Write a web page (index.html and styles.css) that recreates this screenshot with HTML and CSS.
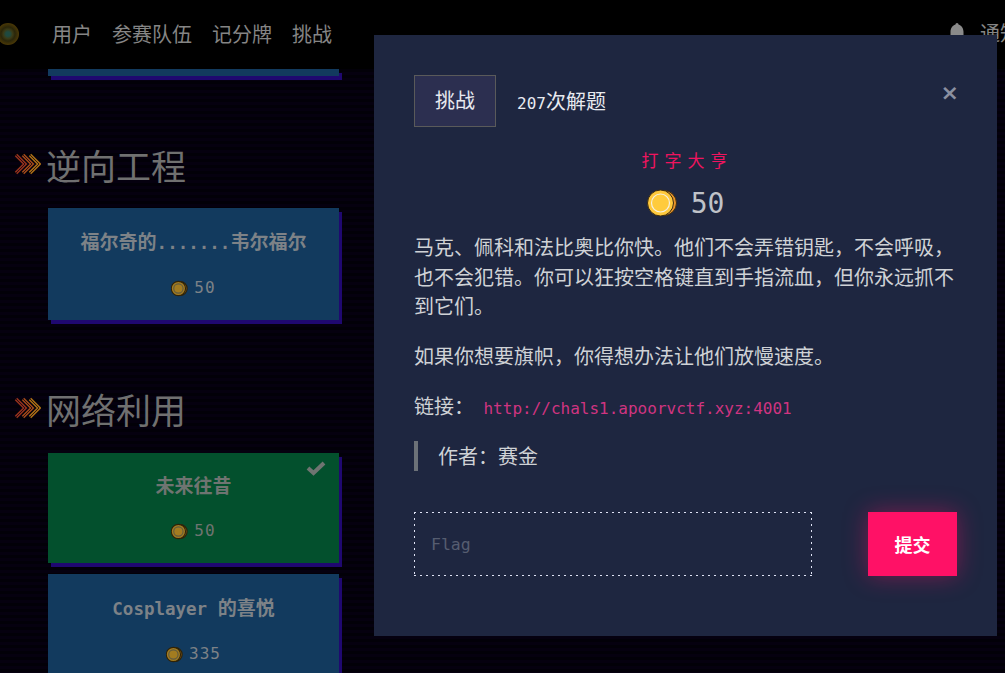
FILE: index.html
```html
<!DOCTYPE html>
<html lang="zh">

<head>
    <meta charset="utf-8">
    <meta name="viewport" content="width=device-width, initial-scale=1.0">
    <title>挑战</title>
    <link rel="stylesheet" href="styles.css">
</head>

<body>
    <svg class="defs" width="0" height="0">
        <defs>
            <g id="coin">
                <circle cx="17" cy="14" r="12.500" fill="#e8932a" stroke="#3a2a10"/>
                <circle cx="13.500" cy="14" r="13" fill="#ffc93c" stroke="#3a2a10"/>
                <circle cx="13.500" cy="14" r="9" fill="#ffcb3d" stroke="#f4f0e0" stroke-width="1.200"/>
            </g>
            <g id="coin-dim">
                <circle cx="17" cy="14" r="12.500" fill="#7a5418" stroke="#2e2208" stroke-width="2"/>
                <circle cx="13.500" cy="14" r="13" fill="#a37c20" stroke="#2e2208" stroke-width="2"/>
                <circle cx="13.500" cy="14" r="8.500" fill="#a37c20" stroke="#5f5a40" stroke-width="2"/>
            </g>
            <g id="chevrons" fill="none">
                <path d="M2 2 L11 11 L2 20" stroke="#8f2f1c" stroke-width="3.500"/>
                <path d="M2 2 L11 11 L2 20" stroke="#2a0c10" stroke-width="1"/>
                <path d="M9 2 L18 11 L9 20" stroke="#9c4619" stroke-width="3.500"/>
                <path d="M9 2 L18 11 L9 20" stroke="#2a1210" stroke-width="1"/>
                <path d="M16 2 L25 11 L16 20" stroke="#a66a15" stroke-width="3.500"/>
                <path d="M16 2 L25 11 L16 20" stroke="#2e1c10" stroke-width="1"/>
            </g>
        </defs>
    </svg>

    <header class="navbar">
        <span class="logo"></span>
        <nav class="nav-links">
            <a>用户</a>
            <a>参赛队伍</a>
            <a>记分牌</a>
            <a>挑战</a>
        </nav>
        <div class="nav-right">
            <svg class="bell" width="14" height="20" viewBox="0 0 14 20"><path d="M7 0 C8 0 8.500 1 8.500 1.500 C12 2.500 13.500 6 13.500 9 L13.500 16 L0.500 16 L0.500 9 C0.500 6 2 2.500 5.500 1.500 C5.500 1 6 0 7 0Z" fill="#8a8a8a"/></svg>
            <a>通知</a>
        </div>
    </header>

    <main class="board">
        <div class="card card-stub"></div>

        <section class="category">
            <h2 class="category-title">
                <svg class="chevrons" width="27" height="22" viewBox="0 0 27 22"><use href="#chevrons"/></svg>
                逆向工程
            </h2>
            <article class="card">
                <h3 class="card-name">福尔奇的<span class="latin">.......</span>韦尔福尔</h3>
                <p class="card-points"><svg width="17" height="17" viewBox="0 0 31 28"><use href="#coin-dim"/></svg>50</p>
            </article>
        </section>

        <section class="category category-second">
            <h2 class="category-title">
                <svg class="chevrons" width="27" height="22" viewBox="0 0 27 22"><use href="#chevrons"/></svg>
                网络利用
            </h2>
            <div class="card-list">
                <article class="card card-solved">
                    <svg class="check" width="20" height="16" viewBox="0 0 20 16"><path d="M2 8 L7.500 13 L18 3" fill="none" stroke="#6f7471" stroke-width="4"/></svg>
                    <h3 class="card-name">未来往昔</h3>
                    <p class="card-points"><svg width="17" height="17" viewBox="0 0 31 28"><use href="#coin-dim"/></svg>50</p>
                </article>
                <article class="card">
                    <h3 class="card-name"><span class="latin">Cosplayer </span>的喜悦</h3>
                    <p class="card-points"><svg width="17" height="17" viewBox="0 0 31 28"><use href="#coin-dim"/></svg>335</p>
                </article>
            </div>
        </section>
    </main>

    <div class="modal">
        <div class="modal-top">
            <span class="tab">挑战</span>
            <span class="solves"><span class="solves-num">207</span>次解题</span>
            <span class="close">×</span>
        </div>
        <h3 class="modal-name">打字大亨</h3>
        <p class="modal-points">
            <svg width="31" height="30" viewBox="0 0 31 28"><use href="#coin"/></svg>
            50
        </p>
        <div class="description">
            <p>马克、佩科和法比奥比你快。他们不会弄错钥匙，不会呼吸，也不会犯错。你可以狂按空格键直到手指流血，但你永远抓不到它们。</p>
            <p>如果你想要旗帜，你得想办法让他们放慢速度。</p>
            <p>链接： <a class="link">http://chals1.apoorvctf.xyz:4001</a></p>
            <blockquote>作者：赛金</blockquote>
        </div>
        <form class="flag-form">
            <input type="text" placeholder="Flag">
            <button type="button">提交</button>
        </form>
    </div>
</body></html>
```

FILE: styles.css
```css
* {
    box-sizing: border-box;
    margin: 0;
    padding: 0;
}

body {
    height: 100vh;
    overflow: hidden;
    background-color: #04000f;
    background-image: repeating-linear-gradient(to bottom, #05000f 0, #05000f 3px, #020008 3px, #020008 6px);
    color: #858585;
    font-family: "DejaVu Sans Mono", "Noto Sans CJK SC", monospace;
}

.defs {
    position: absolute;
}

.navbar {
    height: 69px;
    display: flex;
    align-items: center;
    background-color: #000;
    position: relative;
    font-family: "Noto Sans CJK SC", sans-serif;
}

.logo {
    position: absolute;
    left: -3px;
    top: 23px;
    width: 22px;
    height: 22px;
    border-radius: 50%;
    background: radial-gradient(circle, #1f4a40 0, #1f4a40 14%, #3a3a16 30%, #2a260a 45%, #4a3806 70%, rgba(60, 45, 5, 0.25) 90%, transparent 100%);
}

.nav-links {
    display: flex;
    gap: 20px;
    margin-left: 52px;
    margin-top: -2px;
    font-size: 20px;
}

.nav-right {
    position: absolute;
    left: 950px;
    top: 21px;
    display: flex;
    gap: 16px;
    font-size: 20px;
    line-height: 24px;
    white-space: nowrap;
}

.bell {
    margin-top: 2px;
}

.board {
    padding-left: 48px;
    width: 342px;
}

.card {
    position: relative;
    width: 291px;
    height: 112px;
    padding-top: 19px;
    background-color: #123a5e;
    box-shadow: 3px 4px 0 #1f0870;
    text-align: center;
}

.card-stub {
    height: 7px;
    padding: 0;
}

.category {
    margin-top: 66px;
}

.category-second {
    margin-top: 66px;
}

.category-title {
    position: relative;
    height: 46px;
    margin-bottom: 20px;
    margin-left: -2px;
    font-family: "Noto Sans CJK SC", sans-serif;
    font-size: 35px;
    font-weight: 400;
    line-height: 46px;
    white-space: nowrap;
    color: #707070;
}

.category-second .category-title {
    margin-bottom: 21px;
}

.chevrons {
    position: absolute;
    left: -32px;
    top: 11px;
}

.card-list {
    display: flex;
    flex-direction: column;
    gap: 11px;
}

.card-name {
    font-family: "Noto Sans CJK SC", sans-serif;
    font-size: 19px;
    font-weight: 700;
    line-height: 28px;
    color: #7d8287;
}

.latin {
    font-family: "DejaVu Sans Mono", monospace;
    font-size: 17.500px;
}

.card-points {
    margin-top: 19px;
    display: flex;
    align-items: center;
    justify-content: center;
    gap: 6px;
    font-size: 16px;
    letter-spacing: 1px;
    line-height: 24px;
    color: #7d8287;
}

.card-solved {
    height: 110px;
    padding-top: 18px;
    background-color: #03502d;
}

.card-solved .card-name,
.card-solved .card-points {
    color: #6f7471;
}

.card-solved .card-points {
    margin-top: 20px;
}

.check {
    position: absolute;
    right: 13px;
    top: 7px;
}

.modal {
    position: absolute;
    left: 374px;
    top: 35px;
    width: 623px;
    height: 601px;
    padding: 40px;
    background-color: #1e2640;
    color: #cfd2d6;
    font-family: "Noto Sans CJK SC", sans-serif;
}

.modal-top {
    display: flex;
    align-items: center;
    height: 52px;
}

.tab {
    width: 82px;
    height: 52px;
    padding-bottom: 3px;
    display: flex;
    align-items: center;
    justify-content: center;
    background-color: #2c2f50;
    border: 1px solid #5a5a5a;
    color: #e8eaf0;
    font-size: 20px;
}

.solves {
    margin-left: 21px;
    margin-top: -2px;
    color: #e8eaf0;
    font-size: 20px;
}

.solves-num {
    font-family: "DejaVu Sans Mono", monospace;
    font-size: 16px;
}

.close {
    margin-left: auto;
    margin-right: -2px;
    margin-top: -16px;
    color: #8b90a0;
    font-family: "DejaVu Sans", sans-serif;
    font-size: 22px;
    font-weight: 700;
    line-height: 1;
}

.modal-name {
    margin-top: 21px;
    padding-left: 4px;
    text-align: center;
    font-size: 17px;
    font-weight: 400;
    line-height: 24px;
    letter-spacing: 6px;
    color: #f0145f;
}

.modal-points {
    margin-top: 14px;
    height: 34px;
    display: flex;
    align-items: center;
    justify-content: center;
    gap: 13px;
    font-family: "DejaVu Sans Mono", monospace;
    font-size: 28px;
    color: #bfc2c8;
}

.description {
    margin-top: 12px;
    font-size: 20px;
    line-height: 29.500px;
}

.description p {
    margin-bottom: 20.500px;
}

.link {
    margin-left: 5px;
    font-family: "DejaVu Sans Mono", monospace;
    font-size: 16px;
    line-height: 1;
    color: #d03480;
}

blockquote {
    border-left: 4px solid #6c7178;
    padding-left: 20px;
}

.flag-form {
    margin-top: 41px;
    display: flex;
    justify-content: space-between;
}

.flag-form input {
    width: 398px;
    height: 64px;
    padding-left: 17px;
    padding-top: 2px;
    border: none;
    border-radius: 0;
    background:
        repeating-linear-gradient(to right, #dfe3f5 0, #dfe3f5 2px, transparent 2px, transparent 6px) top / 100% 1px no-repeat,
        repeating-linear-gradient(to right, #dfe3f5 0, #dfe3f5 2px, transparent 2px, transparent 6px) bottom / 100% 1px no-repeat,
        repeating-linear-gradient(to bottom, #dfe3f5 0, #dfe3f5 2px, transparent 2px, transparent 6px) left / 1px 100% no-repeat,
        repeating-linear-gradient(to bottom, #dfe3f5 0, #dfe3f5 2px, transparent 2px, transparent 6px) right / 1px 100% no-repeat;
    font-family: "DejaVu Sans Mono", monospace;
    font-size: 16.500px;
    outline: none;
}

.flag-form input::placeholder {
    color: #565d70;
}

.flag-form button {
    width: 89px;
    height: 64px;
    border: none;
    background-color: #ff1166;
    box-shadow: 0 0 24px rgba(255, 17, 102, 0.4);
    color: #fff;
    font-family: "Noto Sans CJK SC", sans-serif;
    font-size: 18px;
    font-weight: 700;
}
```
